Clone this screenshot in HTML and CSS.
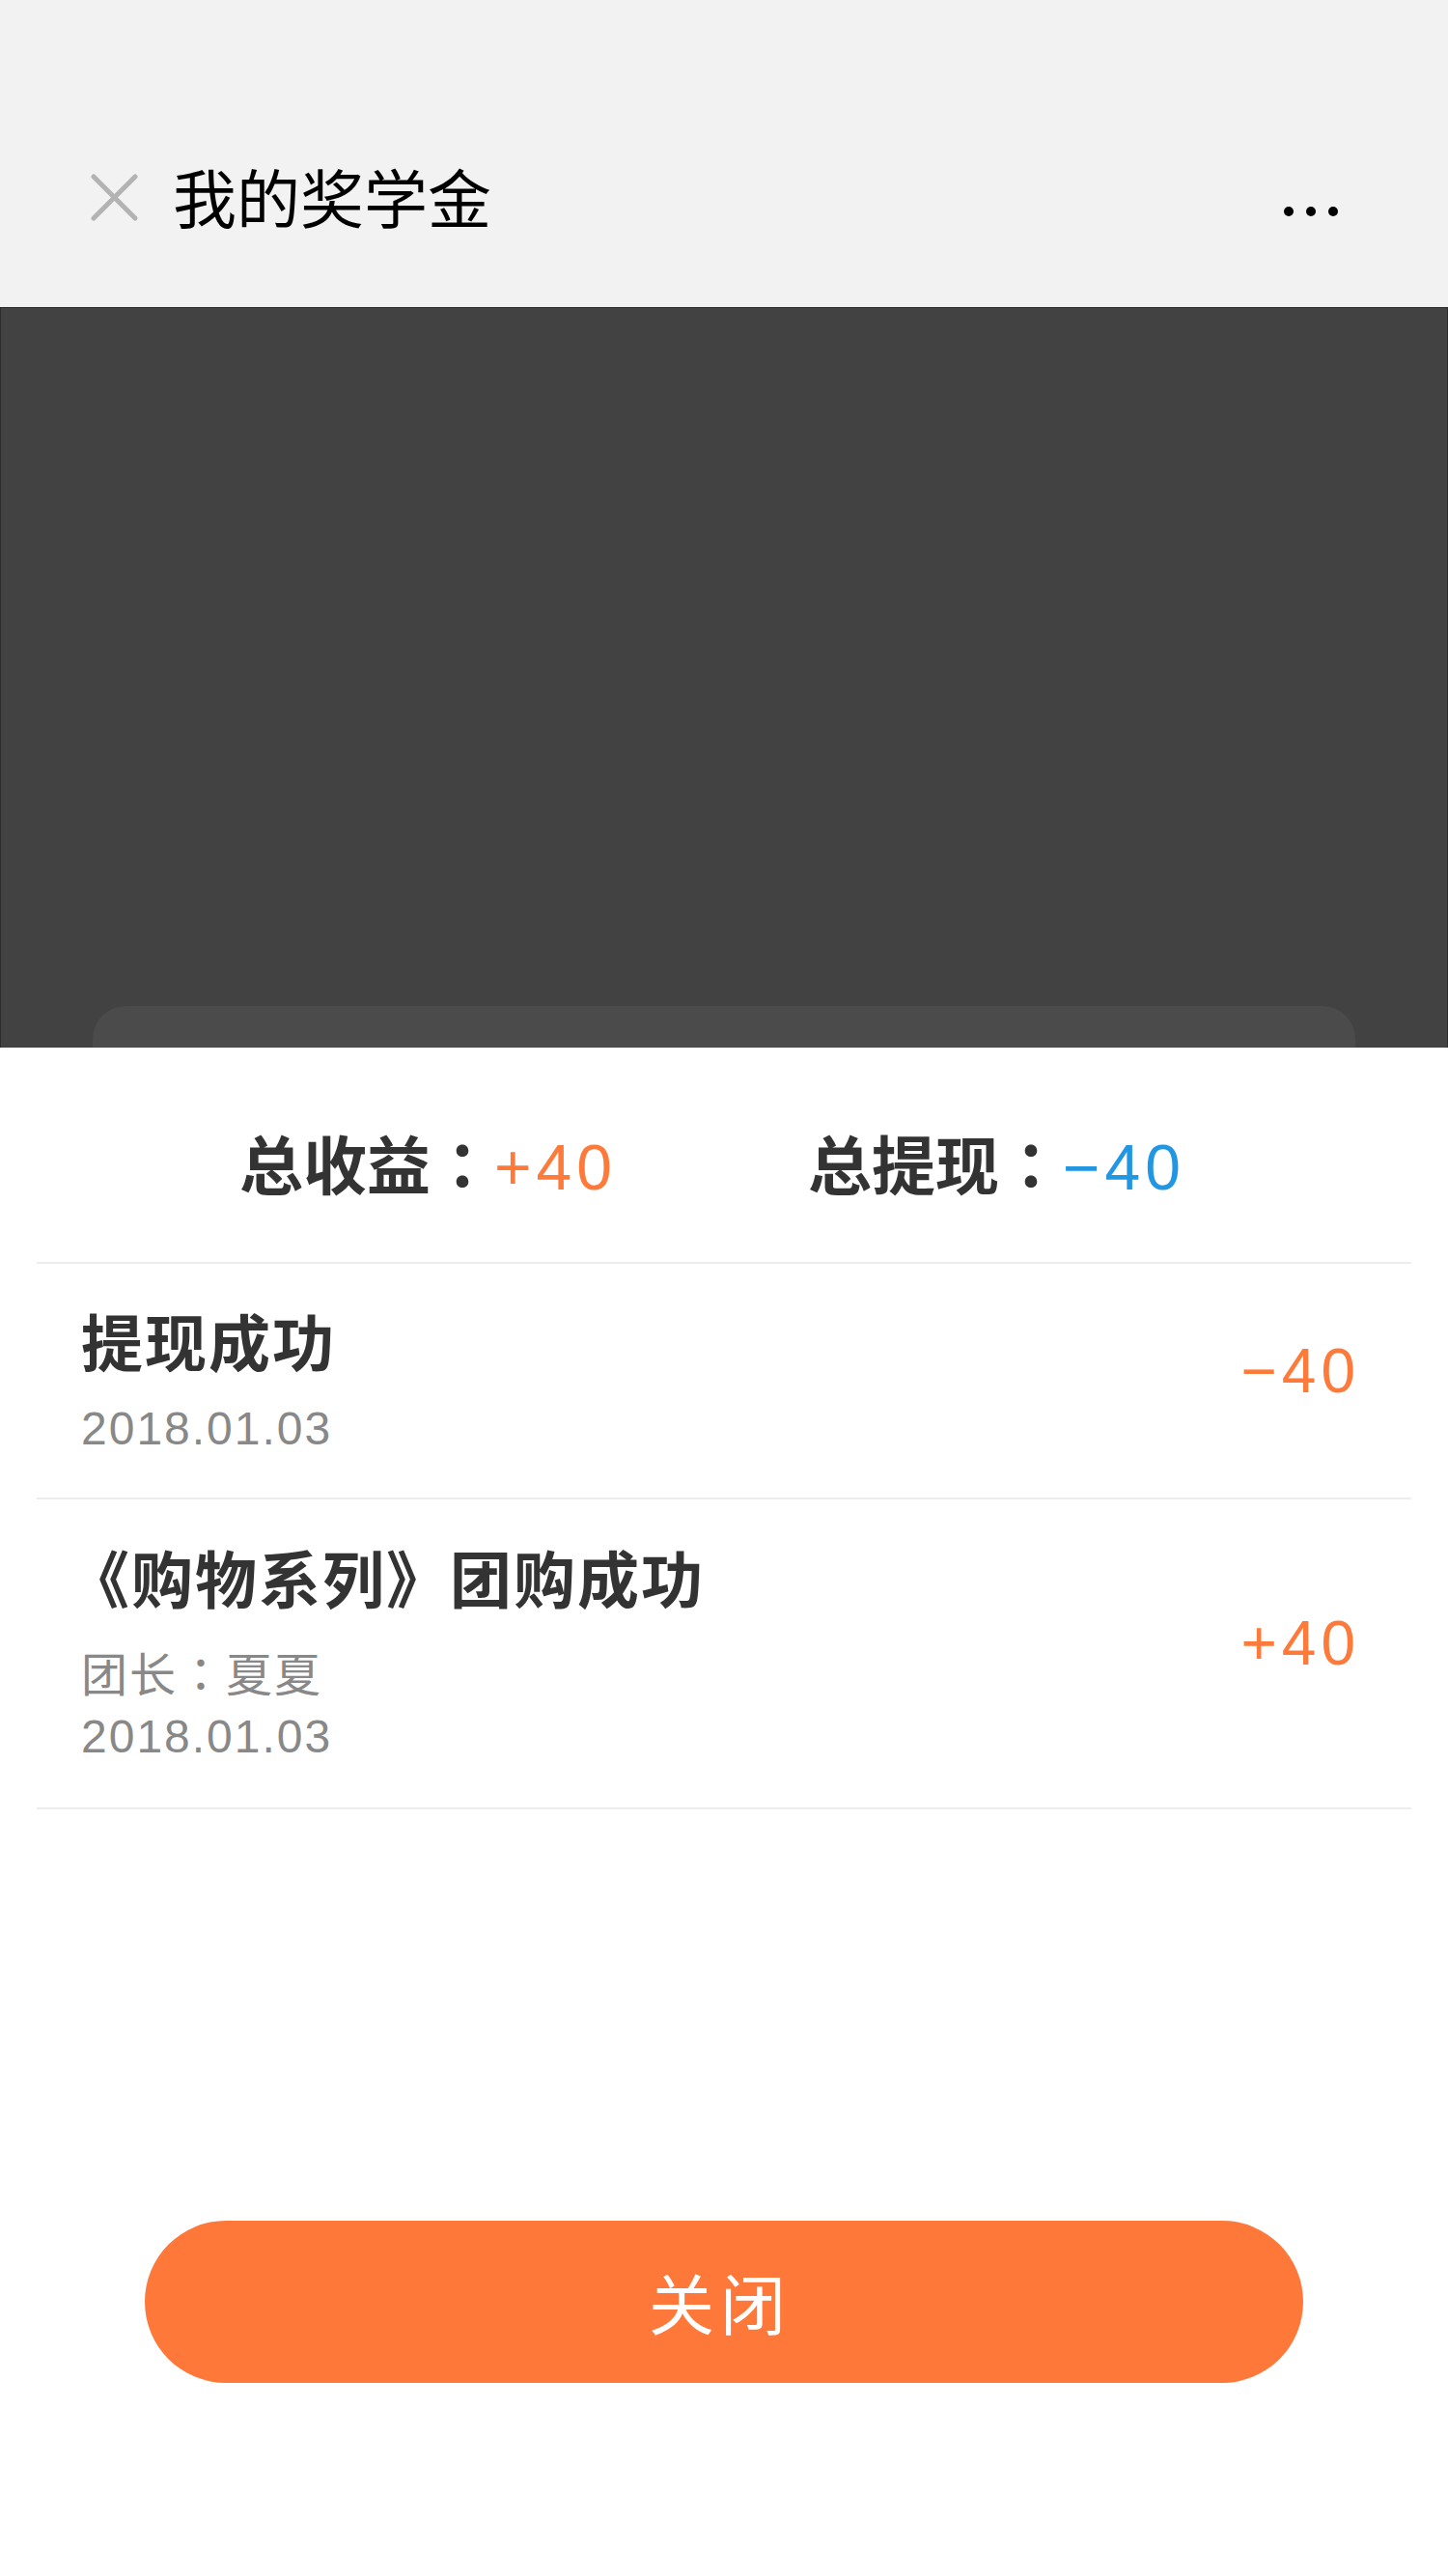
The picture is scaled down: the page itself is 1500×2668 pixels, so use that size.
FILE: index.html
```
<!DOCTYPE html>
<html lang="zh-CN">
<head>
<meta charset="utf-8">
<title>我的奖学金</title>
<link rel="stylesheet" href="styles.css">
</head>
<body>
<div class="page">
  <header class="nav">
    <svg class="close-icon" width="49" height="49" viewBox="0 0 49 49">
      <path d="M3 3 L46 46 M46 3 L3 46" stroke="#b3b3b3" stroke-width="5" stroke-linecap="round" fill="none"/>
    </svg>
    <h1 class="nav-title">我的奖学金</h1>
    <div class="more"><span></span><span></span><span></span></div>
  </header>

  <div class="backdrop">
    <div class="under-card"></div>
  </div>

  <section class="sheet">
    <div class="summary">
      <div class="sum-item"><span class="sum-label">总收益<span class="punct" lang="zh-TW">：</span></span><span class="num plus">+40</span></div>
      <div class="sum-item"><span class="sum-label">总提现<span class="punct" lang="zh-TW">：</span></span><span class="num minus">−40</span></div>
    </div>

    <ul class="records">
      <li class="record">
        <div class="record-info">
          <div class="title">提现成功</div>
          <div class="date">2018.01.03</div>
        </div>
        <div class="amount">−40</div>
      </li>
      <li class="record">
        <div class="record-info">
          <div class="title"><span class="bracket-open">《</span>购物系列》团购成功</div>
          <div class="leader">团长<span class="punct" lang="zh-TW">：</span>夏夏</div>
          <div class="date">2018.01.03</div>
        </div>
        <div class="amount">+40</div>
      </li>
    </ul>

    <button class="close-btn">关闭</button>
  </section>
</div>
</body>
</html>
```

FILE: styles.css
```
* { box-sizing: border-box; }
html, body { margin: 0; padding: 0; background: #ffffff; }
body {
  width: 1500px;
  height: 2668px;
  overflow: hidden;
  font-family: "Noto Sans CJK SC", "Liberation Sans", sans-serif;
}
.page { width: 1500px; }

.nav {
  height: 318px;
  background: #f2f2f2;
  display: flex;
  align-items: center;
  padding: 170px 114px 80px 94px;
}
.close-icon { flex: none; display: block; }
.nav-title {
  margin: 0 0 5px 36px;
  font-size: 66px;
  line-height: 68px;
  font-weight: 400;
  color: #000;
}
.more {
  margin-left: auto;
  margin-top: 30px;
  display: flex;
  gap: 13px;
}
.more span {
  width: 10px;
  height: 10px;
  border-radius: 50%;
  background: #000;
}

.backdrop {
  height: 767px;
  background: #424242;
  border: 1px solid #2d2d2d;
  border-bottom: 0;
  overflow: hidden;
  padding-top: 723px;
}
.under-card {
  margin-left: 95px;
  width: 1308px;
  height: 43px;
  background: #4b4b4b;
  border-radius: 34px 34px 0 0;
}

.sheet {
  background: #fff;
  padding: 0 38px;
}

.punct { font-family: "Noto Sans CJK TC", "Noto Sans CJK SC", sans-serif; }
.bracket-open { margin-left: -14px; }

.summary {
  display: flex;
  gap: 198px;
  padding: 78px 0 64px 210px;
  height: 222px;
}
.sum-item {
  font-size: 66px;
  line-height: 80px;
  color: #333;
  font-weight: 700;
  white-space: nowrap;
}
.num {
  font-family: "Liberation Sans", sans-serif;
  font-weight: 400;
  letter-spacing: 5px;
}
.plus { color: #fe7a3a; }
.minus { color: #2196e3; }

.records {
  list-style: none;
  margin: 0;
  padding: 0;
  border-top: 2px solid #ececec;
}
.record {
  display: flex;
  align-items: center;
  border-bottom: 2px solid #ececec;
  padding: 38px 58px 41px 46px;
}
.record + .record { padding-top: 39px; padding-bottom: 43px; }
.record-info { flex: 1; }
.title {
  font-size: 64px;
  line-height: 80px;
  font-weight: 700;
  color: #333;
  letter-spacing: 2px;
}
.leader {
  font-size: 48px;
  line-height: 60px;
  color: #888;
  letter-spacing: 2px;
  margin-top: 29px;
}
.date {
  font-family: "Liberation Sans", sans-serif;
  font-size: 48px;
  line-height: 60px;
  color: #888;
  letter-spacing: 2px;
  margin-top: 23px;
}
.leader + .date { margin-top: 8px; }
.amount {
  font-family: "Liberation Sans", sans-serif;
  font-size: 64px;
  line-height: 80px;
  color: #fe7a3a;
  letter-spacing: 5px;
  margin-right: -5px;
  margin-bottom: 18px;
}

.close-btn {
  display: block;
  width: 1200px;
  height: 168px;
  margin: 426px auto 0;
  border: 0;
  border-radius: 84px;
  background: #fe783a;
  color: #fff;
  font-family: "Noto Sans CJK SC", sans-serif;
  font-size: 68px;
  line-height: 168px;
  letter-spacing: 6px;
  padding: 0 8px 0 0;
}
```
